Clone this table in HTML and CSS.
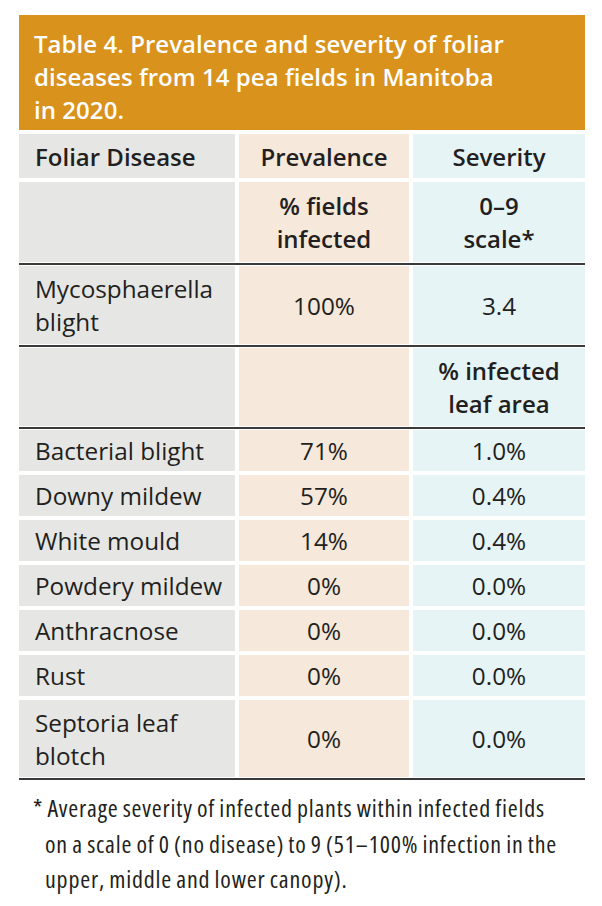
FILE: index.html
```html
<!DOCTYPE html>
<html lang="en">
<head>
<meta charset="utf-8">
<title>Table 4</title>
<link rel="stylesheet" href="styles.css">
</head>
<body>
<div class="panel">
  <div class="title">Table 4. Prevalence and severity of foliar<br>diseases from 14 pea fields in Manitoba<br>in 2020.</div>
  <div class="table">
    <div class="row head">
      <div class="cell c1 bold">Foliar Disease</div>
      <div class="cell c2 bold">Prevalence</div>
      <div class="cell c3 bold">Severity</div>
    </div>
    <div class="row unit">
      <div class="cell c1"></div>
      <div class="cell c2 bold">% fields<br>infected</div>
      <div class="cell c3 bold">0–9<br>scale*</div>
    </div>
    <div class="rule"></div>
    <div class="row two">
      <div class="cell c1">Mycosphaerella<br>blight</div>
      <div class="cell c2">100%</div>
      <div class="cell c3">3.4</div>
    </div>
    <div class="rule"></div>
    <div class="row two">
      <div class="cell c1"></div>
      <div class="cell c2"></div>
      <div class="cell c3 bold">% infected<br>leaf area</div>
    </div>
    <div class="rule"></div>
    <div class="row one">
      <div class="cell c1">Bacterial blight</div>
      <div class="cell c2">71%</div>
      <div class="cell c3">1.0%</div>
    </div>
    <div class="row one">
      <div class="cell c1">Downy mildew</div>
      <div class="cell c2">57%</div>
      <div class="cell c3">0.4%</div>
    </div>
    <div class="row one">
      <div class="cell c1">White mould</div>
      <div class="cell c2">14%</div>
      <div class="cell c3">0.4%</div>
    </div>
    <div class="row one">
      <div class="cell c1">Powdery mildew</div>
      <div class="cell c2">0%</div>
      <div class="cell c3">0.0%</div>
    </div>
    <div class="row one">
      <div class="cell c1">Anthracnose</div>
      <div class="cell c2">0%</div>
      <div class="cell c3">0.0%</div>
    </div>
    <div class="row one">
      <div class="cell c1">Rust</div>
      <div class="cell c2">0%</div>
      <div class="cell c3">0.0%</div>
    </div>
    <div class="row last">
      <div class="cell c1">Septoria leaf<br>blotch</div>
      <div class="cell c2">0%</div>
      <div class="cell c3">0.0%</div>
    </div>
    <div class="rule bottom"></div>
  </div>
  <p class="note">* Average severity of infected plants within infected fields<br>on a scale of 0 (no disease) to 9 (51–100% infection in the<br>upper, middle and lower canopy).</p>
</div>
</body>
</html>
```
FILE: styles.css
```css
html, body {
  margin: 0;
  padding: 0;
  background: #ffffff;
}

body {
  font-family: "Open Sans", "Noto Sans", sans-serif;
  color: #231f20;
}

.panel {
  width: 566px;
  margin: 15px 0 0 19px;
}

.title {
  background: #d9921c;
  color: #ffffff;
  font-weight: 600;
  font-size: 24px;
  line-height: 33px;
  height: 115px;
  box-sizing: border-box;
  padding: 12px 6px 0 15px;
  letter-spacing: 0.05px;
  white-space: nowrap;
}

.table {
  display: flex;
  flex-direction: column;
  gap: 4px;
  margin-top: 4px;
}

.row {
  display: grid;
  grid-template-columns: 216px 170px 172px;
  column-gap: 4px;
}

.cell {
  display: flex;
  align-items: center;
  font-size: 24.3px;
  line-height: 33px;
  white-space: nowrap;
}

.c1 {
  background: #e6e7e5;
  padding-left: 16px;
}

.c2 {
  background: #f6e8da;
  justify-content: center;
  text-align: center;
}

.c3 {
  background: #e6f4f6;
  justify-content: center;
  text-align: center;
}

.bold {
  font-weight: 600;
  font-size: 24px;
}

.head { height: 44px; }
.unit { height: 80px; }
.two { height: 78px; }
.one { height: 41px; }
.last { height: 77px; }

.rule {
  height: 2px;
  background: #3a3a3a;
  margin: -3px 0;
}

.rule.bottom {
  margin-bottom: 0;
}

.note {
  margin: 10px 0 0 0;
  padding-left: 26px;
  text-indent: -12px;
  font-size: 24px;
  line-height: 35.5px;
  font-stretch: 75%;
  letter-spacing: 0.8px;
  word-spacing: -1px;
  white-space: nowrap;
}
```
